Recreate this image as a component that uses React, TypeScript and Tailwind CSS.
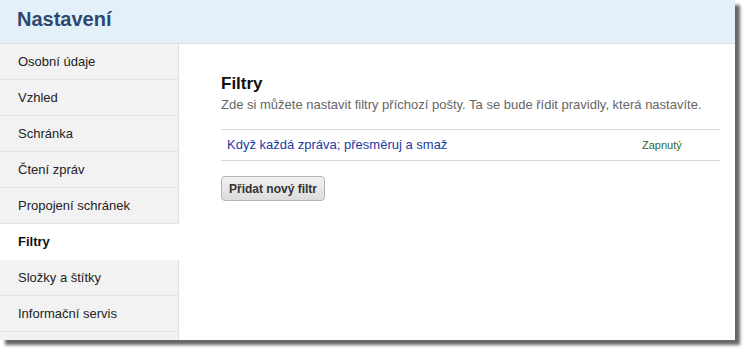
import React from 'react';

const items = [
  'Osobní údaje',
  'Vzhled',
  'Schránka',
  'Čtení zpráv',
  'Propojení schránek',
  'Filtry',
  'Složky a štítky',
  'Informační servis',
];

const App: React.FC = () => {
  const active = 'Filtry';

  return (
    <div className="w-[749px] h-[355px] bg-white font-['Liberation_Sans',Arial,sans-serif]">
      <div className="w-[735px] h-[340px] flex flex-col bg-white overflow-hidden shadow-[5px_5px_3px_rgba(0,0,0,0.6)]">
        <header className="h-[44px] shrink-0 flex items-center pb-[6px] px-[17px] bg-[#e4f0f9] border-b border-[#d2dde6]">
          <h1 className="text-[20px] font-bold text-[#2c4870] leading-none">Nastavení</h1>
        </header>

        <div className="flex flex-1 min-h-0">
          <aside className="w-[179px] shrink-0 flex flex-col bg-[#f2f2f2]">
            {items.map((label) => (
              <div
                key={label}
                className={`h-[36px] shrink-0 flex items-center pl-[18px] text-[13px] border-b border-[#e1e1e1] ${
                  label === active
                    ? 'bg-white font-bold text-[#111] border-b-white'
                    : 'border-r text-[#222]'
                }`}
              >
                {label}
              </div>
            ))}
            <div className="flex-1 border-r border-[#e1e1e1]" />
          </aside>

          <main className="flex-1 pl-[42px] pr-[15px] pt-[30px]">
            <h2 className="text-[17px] leading-[20px] font-bold text-[#111]">Filtry</h2>
            <p className="mt-[3px] text-[13px] leading-[16px] text-[#666]">
              Zde si můžete nastavit filtry příchozí pošty. Ta se bude řídit pravidly, která nastavíte.
            </p>

            <div className="mt-[16px] border-t border-b border-[#d6d6d6]">
              <div className="h-[30px] flex items-center">
                <a className="flex-1 pl-[6px] text-[13px] text-[#1c3aa0]">
                  Když každá zpráva; přesměruj a smaž
                </a>
                <span className="w-[78px] text-[11px] text-[#2f6a2a]">Zapnutý</span>
              </div>
            </div>

            <button className="mt-[15px] h-[25px] px-[7px] rounded-[4px] border border-[#b4b4b4] bg-gradient-to-b from-[#f2f2f2] to-[#dcdcdc] text-[12px] font-bold text-[#333]">
              Přidat nový filtr
            </button>
          </main>
        </div>
      </div>
    </div>
  );
};

export default App;
